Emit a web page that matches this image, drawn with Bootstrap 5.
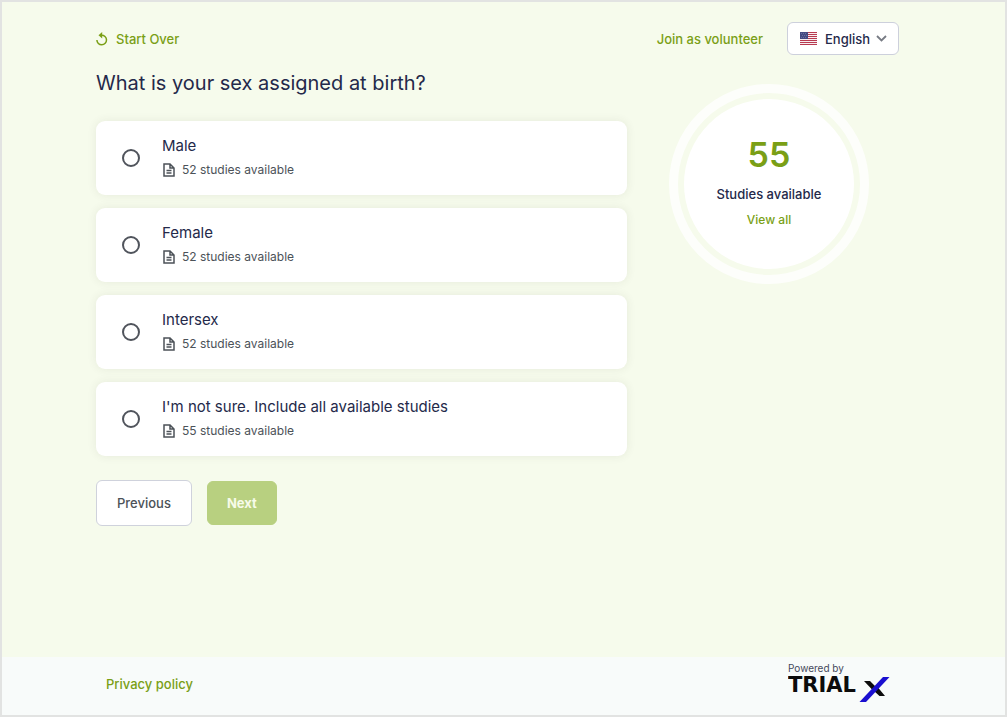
<!DOCTYPE html>
<html lang="en">
<head>
<meta charset="utf-8">
<meta name="viewport" content="width=device-width, initial-scale=1">
<title>Find a study</title>
<link href="https://cdn.jsdelivr.net/npm/bootstrap@5.3.0/dist/css/bootstrap.min.css" rel="stylesheet">
<style>
  :root { --leaf: #7a9f16; --ink: #24294a; --slate: #4c5258; }
  body { font-family: Inter, "Liberation Sans", sans-serif; font-size: 13px; line-height: 20px; color: var(--ink); background: #f6fbec; }
  .page-frame { border: 2px solid #e2e3e2; }
  .page-inner { padding-left: 94px; padding-right: 106px; }
  .leaf-link { color: var(--leaf); font-weight: 500; text-decoration: none; }
  .leaf-link:hover { text-decoration: underline; }
  .top-bar { padding-top: 20px; line-height: 18px; }
  .lang-box { height: 33px; width: 112px; padding: 0 11px 0 12px; border: 1px solid #cdd0dc; border-radius: 6px; background: #fff; }
  .lang-box select { appearance: none; border: 0; background: transparent; color: var(--ink); font-weight: 500; padding: 0; margin-left: 8px; }
  .lang-box .chevron { margin-left: -11px; pointer-events: none; }
  .page-main { padding-top: 14px; }
  .questions { width: 531px; }
  .question-title { font-size: 20px; line-height: 28px; margin: 0 0 24px; padding: 0; font-weight: 400; float: none; }
  .option-card { height: 74px; padding-left: 26px; border-radius: 9px; background: #fff; box-shadow: 0 0 10px rgba(70, 70, 50, .09); cursor: pointer; }
  .option-list { gap: 13px; }
  .option-card input { appearance: none; width: 18px; height: 18px; margin: 0 22px 0 0; border: 2px solid #50545c; border-radius: 50%; background: #fff; }
  .option-card input:checked { border: 6px solid var(--leaf); }
  .option-text { padding-bottom: 2px; }
  .option-name { font-size: 15px; line-height: 22px; }
  .option-count { font-size: 12px; line-height: 18px; margin-top: 4px; gap: 7px; color: var(--slate); }
  .option-count svg { margin-left: 1px; }
  .actions { margin-top: 24px; gap: 15px; }
  .btn-prev, .btn-next { font-size: 13px; line-height: 20px; border-radius: 6px; font-weight: 500; }
  .btn-prev { padding: 12px 20px; color: var(--slate); background: #fff; border: 1px solid #cfd2dc; }
  .btn-next, .btn-next:disabled { padding: 11px 19px; color: #f7fbe9; background: #b8d080; border-color: #b8d080; font-weight: 700; opacity: 1; }
  .tally-side { padding-left: 12px; }
  .tally-ring { width: 200px; height: 200px; margin-top: 15px; padding: 6px; border: 9px solid #fdfefb; }
  .tally-disc { background: #fff; padding-bottom: 4px; }
  .tally-number { font-size: 34px; line-height: 40px; font-weight: 600; color: var(--leaf); }
  .tally-label { margin-top: 9px; font-weight: 500; }
  .tally-link { font-size: 12px; margin-top: 6px; }
  .page-footer { background: #f8fbfa; height: 58px; padding-bottom: 6px; }
  .footer-link { margin: 2px 0 0 10px; }
  .maker { font-size: 10px; line-height: 12px; width: 111px; color: #45495c; }
  .wordmark { font: 700 21px "DejaVu Sans", sans-serif; }
</style>
</head>
<body>
<svg class="d-none" aria-hidden="true">
  <symbol id="doc" viewBox="0 0 12 14"><path fill="none" stroke="currentColor" stroke-width="1.500" d="M1 1h6l4 4v8H1zM7 1v4h4M3.500 7.500h5M3.500 10h5"/></symbol>
</svg>
<div class="page-frame min-vh-100 d-flex flex-column">
  <div class="page-inner flex-grow-1">
    <header class="top-bar d-flex align-items-center justify-content-between">
      <a href="#" class="leaf-link d-flex align-items-center gap-2">
        <svg width="12" height="14" viewBox="0 0 12 14" fill="none" stroke="currentColor" stroke-width="1.500" aria-hidden="true"><path d="M5.500 3.200A4.800 4.800 0 1 1 .9 8"/><path d="M6.200 0 2.500 3.200l3.700 3.200z" fill="currentColor" stroke="none"/></svg>
        Start Over
      </a>
      <div class="d-flex align-items-center gap-4">
        <a href="#" class="leaf-link">Join as volunteer</a>
        <div class="lang-box d-flex align-items-center">
          <svg class="flex-shrink-0" width="17" height="13" viewBox="0 0 17 13" aria-hidden="true"><path fill="#f7eef0" d="M0 0h17v13H0z"/><path stroke="#b83a50" d="M0 .5h17M0 2.500h17M0 4.500h17M0 6.500h17M0 8.500h17M0 10.500h17M0 12.500h17"/><path fill="#434b82" d="M0 0h8v7H0z"/><path stroke="#6a70a0" stroke-dasharray="1 1" d="M1 1.500h6M2 3.500h5M1 5.500h6"/></svg>
          <select aria-label="Language"><option>English</option><option>Español</option></select>
          <svg class="chevron ms-auto flex-shrink-0" width="11" height="7" viewBox="0 0 11 7" fill="none" stroke="#777b84" stroke-width="1.800" aria-hidden="true"><path d="m1 1 4.500 4.500L10 1"/></svg>
        </div>
      </div>
    </header>
    <main class="page-main d-flex align-items-start">
      <form class="questions flex-shrink-1">
        <fieldset>
          <legend class="question-title">What is your sex assigned at birth?</legend>
          <div class="option-list d-flex flex-column">
            <label class="option-card d-flex align-items-center"><input type="radio" name="sex" value="male"><span class="option-text"><span class="option-name d-block">Male</span><span class="option-count d-flex align-items-center"><svg width="12" height="14" aria-hidden="true"><use href="#doc"/></svg>52 studies available</span></span></label>
            <label class="option-card d-flex align-items-center"><input type="radio" name="sex" value="female"><span class="option-text"><span class="option-name d-block">Female</span><span class="option-count d-flex align-items-center"><svg width="12" height="14" aria-hidden="true"><use href="#doc"/></svg>52 studies available</span></span></label>
            <label class="option-card d-flex align-items-center"><input type="radio" name="sex" value="intersex"><span class="option-text"><span class="option-name d-block">Intersex</span><span class="option-count d-flex align-items-center"><svg width="12" height="14" aria-hidden="true"><use href="#doc"/></svg>52 studies available</span></span></label>
            <label class="option-card d-flex align-items-center"><input type="radio" name="sex" value="any"><span class="option-text"><span class="option-name d-block">I'm not sure. Include all available studies</span><span class="option-count d-flex align-items-center"><svg width="12" height="14" aria-hidden="true"><use href="#doc"/></svg>55 studies available</span></span></label>
          </div>
        </fieldset>
        <div class="actions d-flex align-items-center">
          <button type="button" class="btn btn-prev">Previous</button>
          <button type="submit" class="btn btn-next" disabled>Next</button>
        </div>
      </form>
      <aside class="tally-side flex-grow-1 d-flex justify-content-center">
        <div class="tally-ring rounded-circle">
          <div class="tally-disc rounded-circle h-100 d-flex flex-column align-items-center justify-content-center">
            <div class="tally-number">55</div>
            <div class="tally-label">Studies available</div>
            <a href="#" class="leaf-link tally-link">View all</a>
          </div>
        </div>
      </aside>
    </main>
  </div>
  <footer class="page-footer page-inner d-flex align-items-center justify-content-between">
    <a href="#" class="leaf-link footer-link">Privacy policy</a>
    <div class="maker">Powered by
      <svg class="d-block" width="102" height="30" viewBox="0 0 102 30" role="img" aria-label="TrialX">
        <text class="wordmark" x="0" y="18" fill="#0c0c0c">TRIAL</text>
        <path d="M76 7h6l5.500 5.500-3 3.500zM86 17l4-3.500 7 8.500h-5.500z" fill="#0c0c0c"/>
        <path d="M95 3h6.500L78 28h-6.500z" fill="#1a0fd0"/>
      </svg>
    </div>
  </footer>
</div>
<script src="https://cdn.jsdelivr.net/npm/bootstrap@5.3.0/dist/js/bootstrap.bundle.min.js"></script>
</body>
</html>
